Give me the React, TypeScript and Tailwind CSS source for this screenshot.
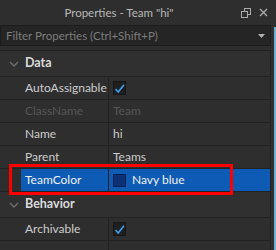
import React from "react";

const Chevron = () => (
  <svg width="10" height="6" viewBox="0 0 10 6" className="shrink-0">
    <polyline points="1,1 5,5 9,1" fill="none" stroke="#6f6f6f" strokeWidth="1.4" />
  </svg>
);

const Check = () => (
  <div className="w-[13px] h-[14px] bg-[#1f1f1f] border border-[#161616] flex items-center justify-center">
    <svg width="11" height="11" viewBox="0 0 11 11">
      <polyline points="1.5,6 4.2,9 10,1.8" fill="none" stroke="#3aa0f0" strokeWidth="1.6" />
    </svg>
  </div>
);

const Section = ({ name }: { name: string }) => (
  <div className="h-[26px] border-b border-[#222222] bg-[#303030] flex items-center">
    <div className="w-[25px] flex justify-center pl-[2px]">
      <Chevron />
    </div>
    <span className="font-bold text-[#dcdcdc] text-[12.5px]">{name}</span>
  </div>
);

const Row = ({
  label,
  children,
  dim,
  selected,
}: {
  label: string;
  children: React.ReactNode;
  dim?: boolean;
  selected?: boolean;
}) => (
  <div className="h-[23px] border-b border-[#222222] flex">
    <div className="w-[21px] shrink-0" />
    <div className={`flex flex-1 ${selected ? "bg-[#0d5bb5] text-[#f0f0f0]" : dim ? "text-[#565656]" : "text-[#cccccc]"}`}>
      <div className="w-[88px] border-r border-[#222222] flex items-center pl-[4px]">{label}</div>
      <div className="flex-1 flex items-center pl-[4px] gap-[6px]">{children}</div>
    </div>
  </div>
);

export default function App() {
  return (
    <div
      className="w-[276px] h-[250px] bg-[#2e2e2e] relative overflow-hidden text-[12px] leading-none"
      style={{ fontFamily: "Lato, 'Liberation Sans', sans-serif" }}
    >
      <div className="h-[25px] flex items-center">
        <div className="flex-1 text-center text-[#b8b8b8] text-[11.5px]">Properties - Team "hi"</div>
        <div className="w-[38px] flex items-center gap-[8px] pl-[3px]">
          <svg width="10" height="10" viewBox="0 0 10 10">
            <rect x="3.5" y="0.5" width="6" height="6" fill="none" stroke="#aaaaaa" />
            <rect x="0.5" y="3.5" width="6" height="6" fill="#2e2e2e" stroke="#aaaaaa" />
          </svg>
          <svg width="9" height="9" viewBox="0 0 9 9">
            <path d="M1 1L8 8M8 1L1 8" stroke="#aaaaaa" strokeWidth="1.4" />
          </svg>
        </div>
      </div>
      <div className="flex">
        <div className="w-[271px]">
          <div className="h-[21px] bg-[#252525] border border-[#1c1c1c] flex items-center pl-[5px] pr-[5px]">
            <span className="flex-1 text-[#7c7c7c] text-[11.5px]">Filter Properties (Ctrl+Shift+P)</span>
            <svg width="7" height="4" viewBox="0 0 7 4">
              <polygon points="0,0 7,0 3.5,4" fill="#b0b0b0" />
            </svg>
          </div>
          <div className="mt-[4px] border-t border-r border-[#222222]">
            <Section name="Data" />
            <Row label="AutoAssignable">
              <Check />
            </Row>
            <Row label="ClassName" dim>
              Team
            </Row>
            <Row label="Name">hi</Row>
            <Row label="Parent">Teams</Row>
            <Row label="TeamColor" selected>
              <div className="w-[13px] h-[13px] bg-[#0b3176] border border-[#0a2050]" />
              <span>Navy blue</span>
            </Row>
            <Section name="Behavior" />
            <Row label="Archivable">
              <Check />
            </Row>
            <Row label="">{null}</Row>
          </div>
        </div>
        <div className="flex-1 flex justify-end pt-[2px]">
          <div className="w-[2px] bg-[#6cb2d4]" />
        </div>
      </div>
      <div className="absolute left-[9px] top-[164px] w-[224px] h-[31px] border-[3px] border-[#ff0000]" />
    </div>
  );
}
